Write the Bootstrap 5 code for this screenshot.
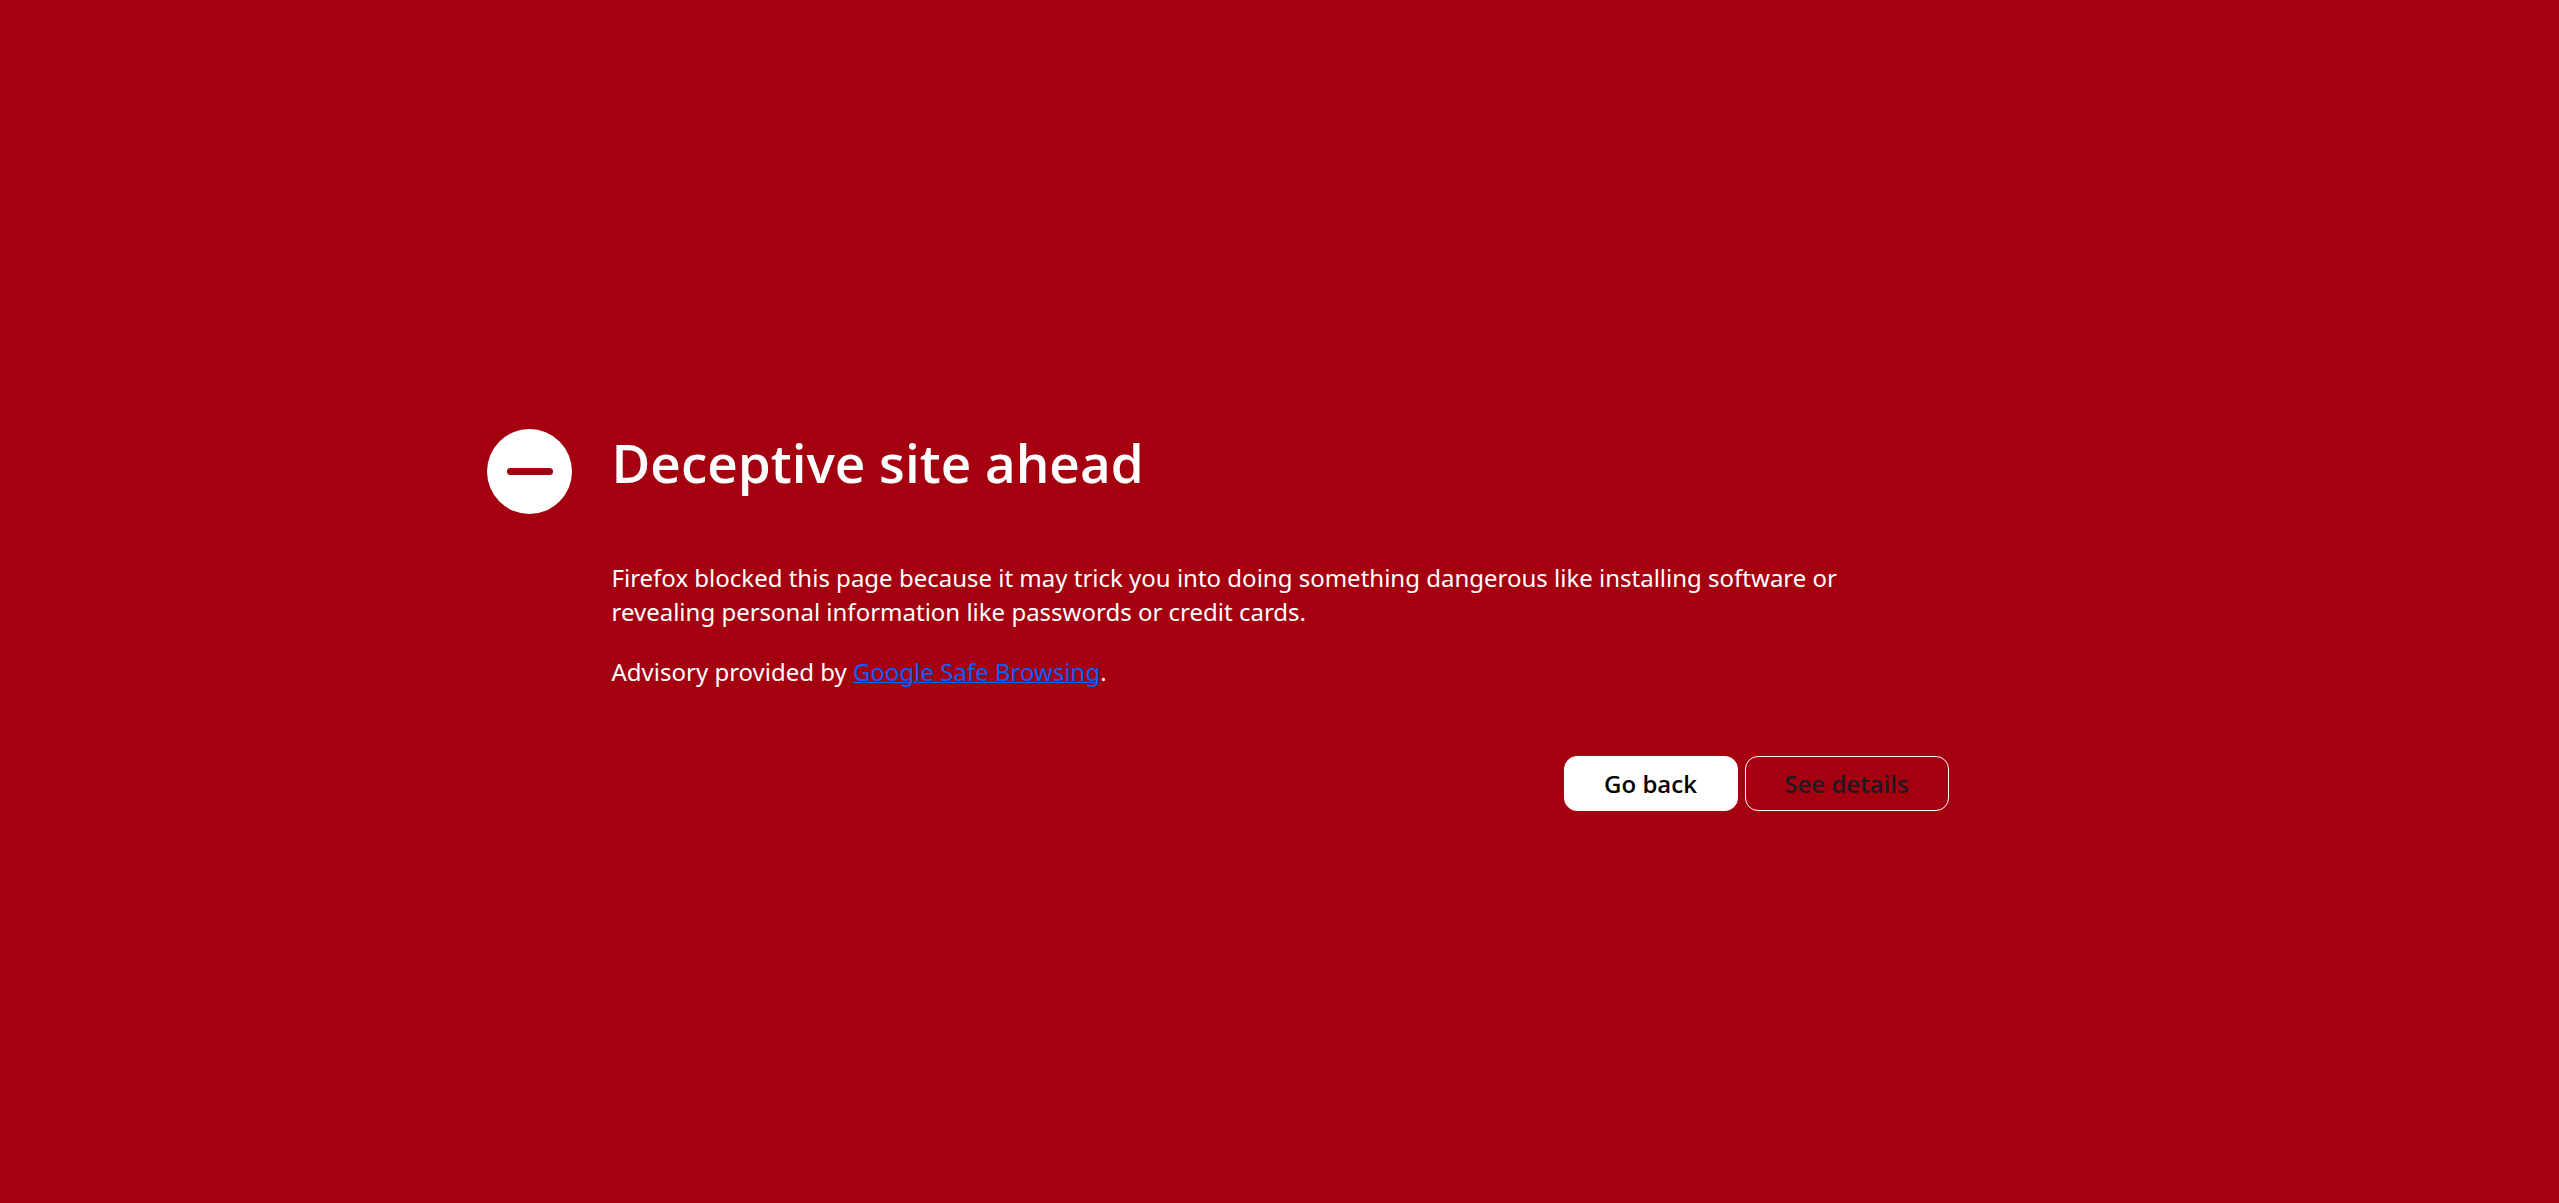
<!DOCTYPE html>
<html lang="en">
<head>
<meta charset="utf-8">
<meta name="viewport" content="width=device-width, initial-scale=1">
<title>Deceptive site ahead</title>
<link href="https://cdn.jsdelivr.net/npm/bootstrap@5.3.0/dist/css/bootstrap.min.css" rel="stylesheet">
<style>
  body { background: #a4000f; color: #fff; font-family: "Noto Sans", "Open Sans", sans-serif; font-size: 24px; line-height: 34px; }
  .blocked-page { width: 100%; max-width: 1586px; padding-top: 36px; gap: 40px; }
  .blocked-icon { width: 85px; height: 85px; }
  .blocked-body { margin-right: 124px; min-width: 0; }
  .blocked-title { font-family: "Open Sans", "Noto Sans", sans-serif; font-size: 53px; font-weight: 600; line-height: 68px; margin-bottom: 64px; }
  .blocked-body p { max-width: 1280px; margin-bottom: 26px; }
  .blocked-link { color: #0060ff; text-decoration-thickness: 1px; }
  .blocked-actions { gap: 7px; margin-top: 67px; }
  .action-btn { --bs-btn-font-family: "Open Sans", "Noto Sans", sans-serif; --bs-btn-font-size: 24px; --bs-btn-font-weight: 600; --bs-btn-line-height: 33px; --bs-btn-padding-x: 38px; --bs-btn-padding-y: 10px; --bs-btn-border-radius: 13px; }
  .action-back { --bs-btn-bg: #fff; --bs-btn-color: #000; --bs-btn-border-color: #fff; --bs-btn-hover-bg: #eee; min-width: 174px; }
  .action-details { --bs-btn-color: #1c1b22; --bs-btn-border-color: #fff; --bs-btn-hover-border-color: #fff; min-width: 204px; }
</style>
</head>
<body class="min-vh-100 d-flex align-items-center justify-content-center">
<main class="blocked-page d-flex flex-wrap flex-md-nowrap align-items-start">
  <svg class="blocked-icon flex-shrink-0" viewBox="0 0 85 85" aria-hidden="true">
    <circle cx="42.5" cy="42.5" r="42.5" fill="#fff"/>
    <rect x="20" y="39" width="46" height="7" rx="3.5" fill="#a4000f"/>
  </svg>
  <div class="blocked-body flex-grow-1">
    <h1 class="blocked-title">Deceptive site ahead</h1>
    <p>Firefox blocked this page because it may trick you into doing something dangerous like installing software or revealing personal information like passwords or credit cards.</p>
    <p>Advisory provided by <a class="blocked-link" href="#">Google Safe Browsing</a>.</p>
    <div class="blocked-actions d-flex flex-wrap justify-content-end">
      <button type="button" class="btn action-btn action-back">Go back</button>
      <button type="button" class="btn action-btn action-details">See details</button>
    </div>
  </div>
</main>
<script src="https://cdn.jsdelivr.net/npm/bootstrap@5.3.0/dist/js/bootstrap.bundle.min.js"></script>
</body>
</html>
